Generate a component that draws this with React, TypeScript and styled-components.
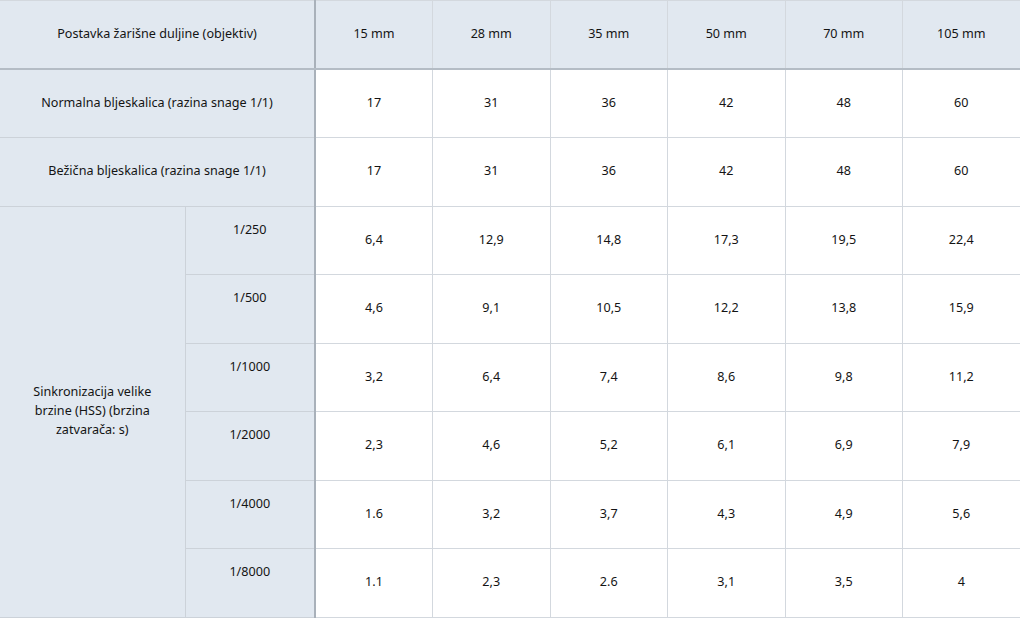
import React from "react";
import styled, { createGlobalStyle } from "styled-components";

const Global = createGlobalStyle`
  html, body { margin: 0; padding: 0; background: #ffffff; }
  body { font-family: "Noto Sans", "Open Sans", sans-serif; }
`;

const Table = styled.table`
  width: 1020px;
  border-collapse: collapse;
  table-layout: fixed;
  font-family: "Noto Sans", sans-serif;
  font-size: 12.6px;
  color: #141414;
  border-top: 1px solid #d3d8de;
`;

const Row = styled.tr`
  height: 68.5px;
`;

const HeadCell = styled.th<{ $divider?: boolean }>`
  background: #e1e8f0;
  font-weight: normal;
  text-align: center;
  vertical-align: middle;
  border-bottom: 2px solid #b4bcc5;
  border-right: ${(p) => (p.$divider ? "2px solid #a9b1ba" : "1px solid #d3d8de")};
  padding: 0 8px 2px;
`;

const LabelCell = styled.th<{ $top?: boolean; $divider?: boolean }>`
  background: #e1e8f0;
  font-weight: normal;
  text-align: center;
  vertical-align: ${(p) => (p.$top ? "top" : "middle")};
  padding: ${(p) => (p.$top ? "13px 8px 0" : "0 20px 2px")};
  line-height: 19px;
  border-bottom: 1px solid #ccd2d9;
  border-right: ${(p) => (p.$divider ? "2px solid #a9b1ba" : "1px solid #ccd2d9")};
`;

const ValueCell = styled.td`
  background: #ffffff;
  text-align: center;
  vertical-align: middle;
  border-bottom: 1px solid #d3d8de;
  border-right: 1px solid #d3d8de;
  padding: 0 0 2px;
`;

const lenses = ["15 mm", "28 mm", "35 mm", "50 mm", "70 mm", "105 mm"];

const hss: [string, string[]][] = [
  ["1/250", ["6,4", "12,9", "14,8", "17,3", "19,5", "22,4"]],
  ["1/500", ["4,6", "9,1", "10,5", "12,2", "13,8", "15,9"]],
  ["1/1000", ["3,2", "6,4", "7,4", "8,6", "9,8", "11,2"]],
  ["1/2000", ["2,3", "4,6", "5,2", "6,1", "6,9", "7,9"]],
  ["1/4000", ["1.6", "3,2", "3,7", "4,3", "4,9", "5,6"]],
  ["1/8000", ["1.1", "2,3", "2.6", "3,1", "3,5", "4"]],
];

export default function App() {
  return (
    <>
      <Global />
      <Table>
        <colgroup>
          <col style={{ width: 185 }} />
          <col style={{ width: 130 }} />
          {lenses.map((l) => (
            <col key={l} style={{ width: 117.5 }} />
          ))}
        </colgroup>
        <thead>
          <Row>
            <HeadCell colSpan={2} $divider>
              Postavka žarišne duljine (objektiv)
            </HeadCell>
            {lenses.map((l) => (
              <HeadCell key={l}>{l}</HeadCell>
            ))}
          </Row>
        </thead>
        <tbody>
          <Row>
            <LabelCell colSpan={2} $divider>
              Normalna bljeskalica (razina snage 1/1)
            </LabelCell>
            {["17", "31", "36", "42", "48", "60"].map((v, i) => (
              <ValueCell key={i}>{v}</ValueCell>
            ))}
          </Row>
          <Row>
            <LabelCell colSpan={2} $divider>
              Bežična bljeskalica (razina snage 1/1)
            </LabelCell>
            {["17", "31", "36", "42", "48", "60"].map((v, i) => (
              <ValueCell key={i}>{v}</ValueCell>
            ))}
          </Row>
          {hss.map(([speed, vals], r) => (
            <Row key={speed}>
              {r === 0 && (
                <LabelCell rowSpan={6}>
                  Sinkronizacija velike brzine (HSS) (brzina zatvarača: s)
                </LabelCell>
              )}
              <LabelCell $top $divider>
                {speed}
              </LabelCell>
              {vals.map((v, i) => (
                <ValueCell key={i}>{v}</ValueCell>
              ))}
            </Row>
          ))}
        </tbody>
      </Table>
    </>
  );
}
